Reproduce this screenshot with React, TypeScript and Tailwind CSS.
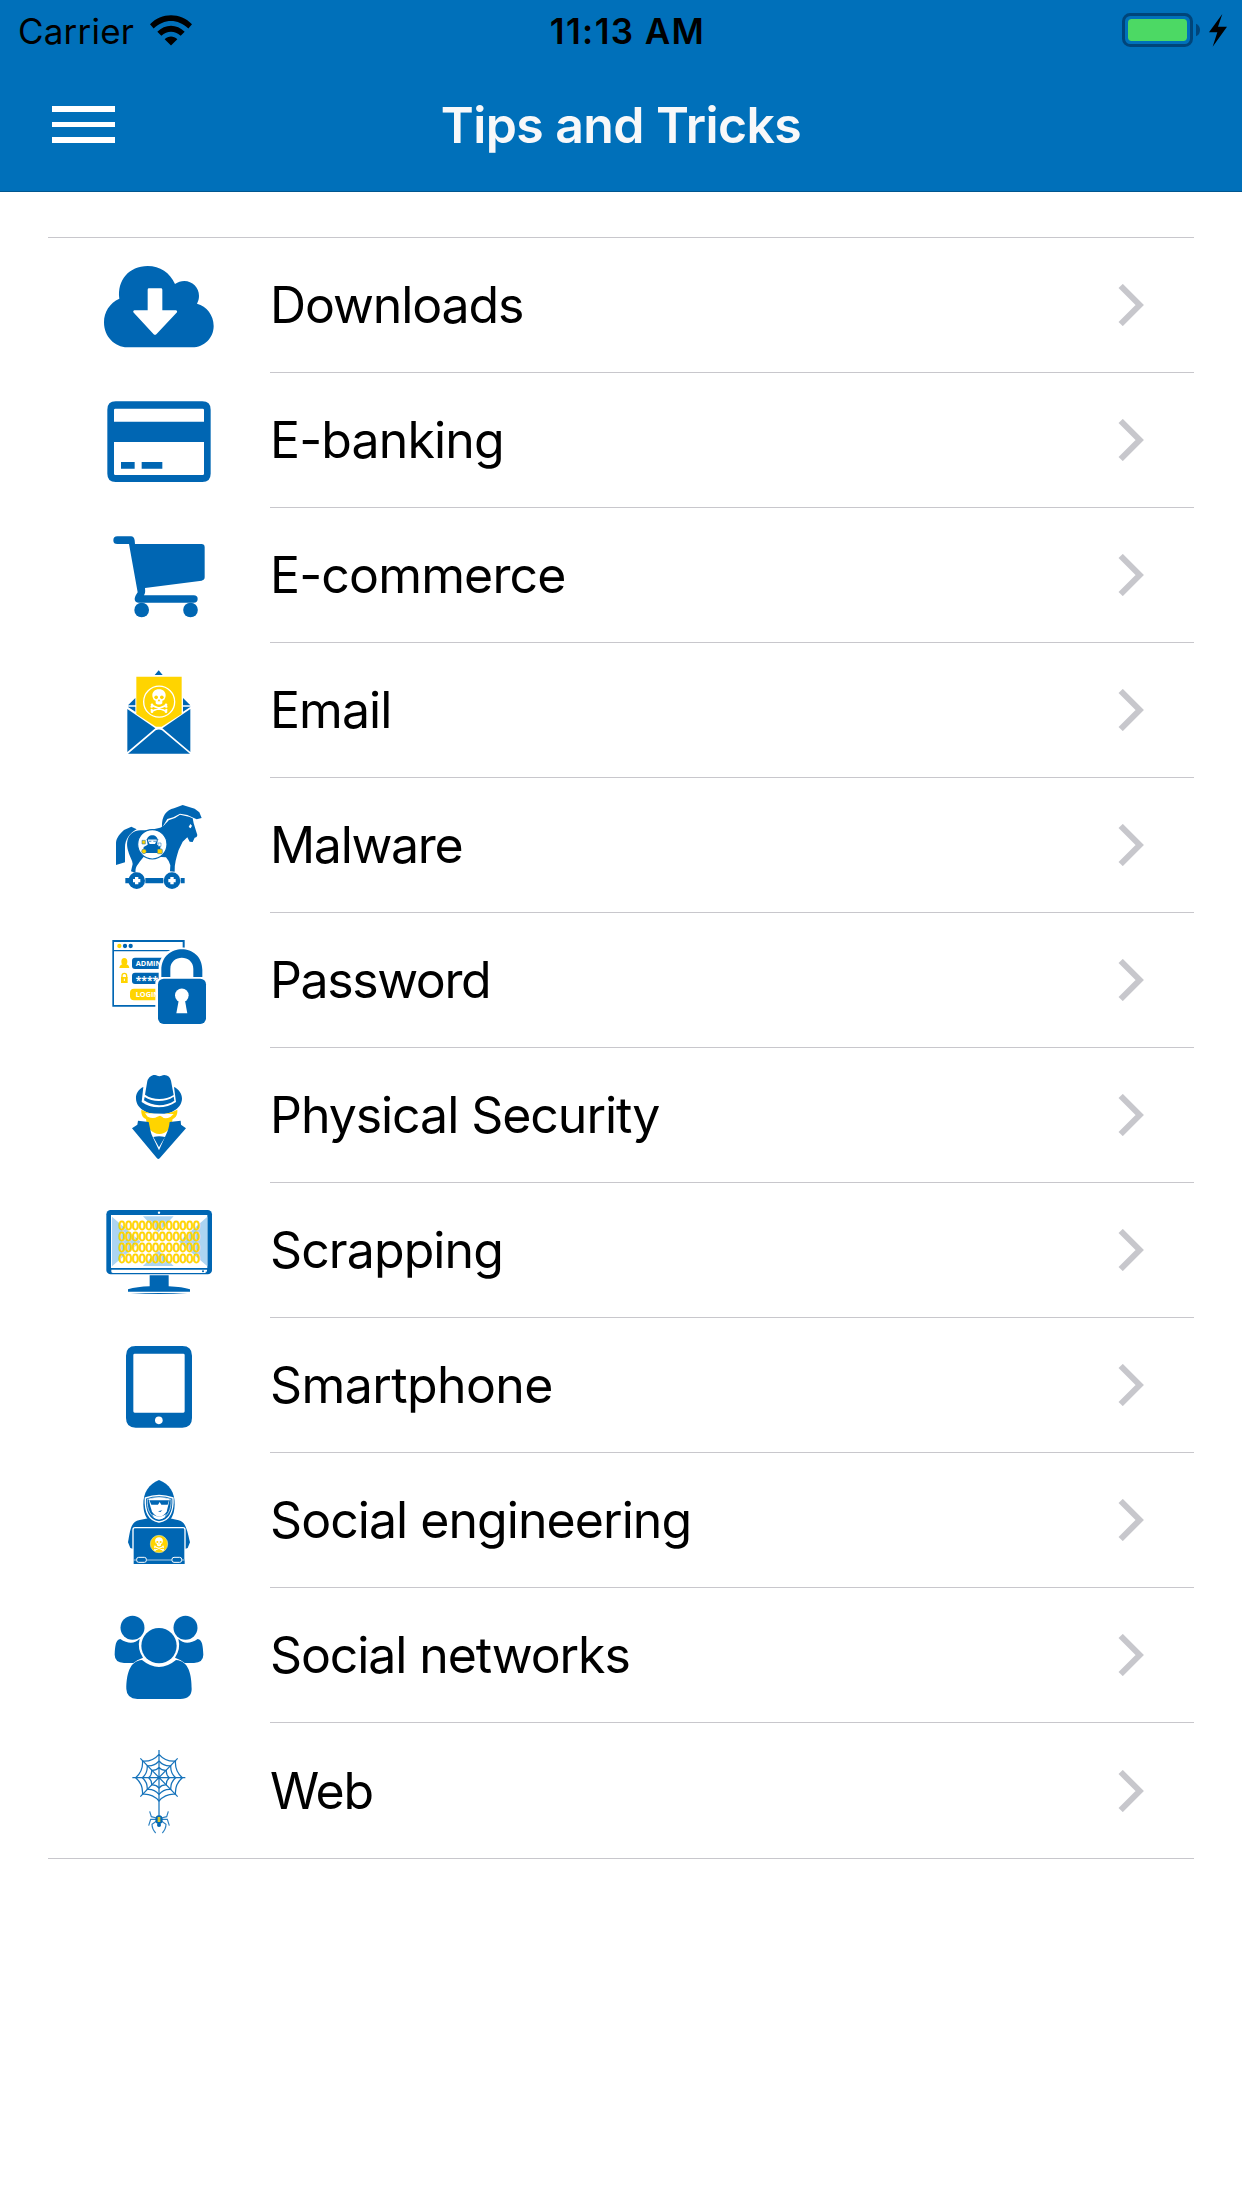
import type { ReactNode } from 'react';

const BLUE = '#0066b3';
const YELLOW = '#ffd400';

function Icon({ children }: { children: ReactNode }) {
  return (
    <svg className="h-[134px] w-[120px] shrink-0" viewBox="0 -36 360 402" fill={BLUE} aria-hidden="true">
      {children}
    </svg>
  );
}

function Skull({ cut }: { cut: string }) {
  return (
    <g>
      <g stroke="#fff" strokeWidth="5.5" strokeLinecap="round">
        <path d="M-20 11 20 27M20 11-20 27" />
      </g>
      <g fill="#fff">
        <circle cx="-21" cy="8.500" r="4" />
        <circle cx="-22" cy="14" r="3.500" />
        <circle cx="21" cy="8.500" r="4" />
        <circle cx="22" cy="14" r="3.500" />
        <circle cx="-21" cy="29" r="4" />
        <circle cx="-22" cy="24" r="3.500" />
        <circle cx="21" cy="29" r="4" />
        <circle cx="22" cy="24" r="3.500" />
        <path d="M0-38c-13 0-20 8-20 18 0 6 2 8 3 11 1 4 5 4 7 5v8c3 5 17 5 20 0v-8c2-1 6-1 7-5 1-3 3-5 3-11 0-10-7-18-20-18Z" />
      </g>
      <g fill={cut}>
        <circle cx="-8.500" cy="-14" r="5.500" />
        <circle cx="8.500" cy="-14" r="5.500" />
        <path d="m0-9 4 7h-8z" />
      </g>
    </g>
  );
}

function DownloadsIcon() {
  return (
    <Icon>
      <path d="M82 292C44 292 12 260 12 217c0-31 17-58 46-71C51 91 87 48 143 48c37 0 67 20 82 54 9-6 18-9 28-9 24 0 44 20 44 44 0 9-2 16-6 24 29 8 50 34 50 67 0 36-29 64-64 64Z" />
      <path
        fill="#fff"
        d="M147 115h36q4 0 4 4v62h41q5 2 3 6l-62 66q-4 3-8 0l-61-66q-2-4 3-6h40v-62q0-4 4-4Z"
      />
    </Icon>
  );
}

function BankingIcon() {
  return (
    <Icon>
      <path
        fillRule="evenodd"
        d="M47 49h260q25 0 25 25v192q0 25-25 25H47q-25 0-25-25V74q0-25 25-25Zm-1 22q-4 0-4 4v35h270V75q0-4-4-4ZM42 171v95q0 4 4 4h262q4 0 4-4v-95Z"
      />
      <path d="M63 231h41v20H63zM125 231h62v20h-62z" />
    </Icon>
  );
}

function CommerceIcon() {
  return (
    <Icon>
      <path d="M52 49h41q9 0 11 12l1 11h199q10 0 10 10v90q0 8-9 10l-170 22q1 8 0 15l-3 7h149q12 0 12 11t-12 11H117q-13 0-13-11 0-7 9-20L87 72H52q-12 0-12-11.500T52 49Z" />
      <circle cx="125" cy="270" r="22" />
      <circle cx="271.500" cy="270" r="22" />
    </Icon>
  );
}

function EmailIcon() {
  return (
    <Icon>
      <path d="m176 46 12 14h-24zM106 129v22H84ZM106 155v15l-23-15ZM249 129v22h22ZM249 155v15l23-15Z" />
      <path fill={YELLOW} d="M109 65h136v112l-60 38h-17l-59-38z" />
      <path d="m82 162 84 58-84 71zM271 162l-84 58 84 71zM84 296l83-70q9-5 19 0l84 70z" />
      <circle cx="177.500" cy="140" r="46.500" fill="none" stroke="#fff" strokeWidth="4" />
      <g transform="translate(177 141)">
        <Skull cut={YELLOW} />
      </g>
    </Icon>
  );
}

function MalwareIcon() {
  return (
    <Icon>
      <path d="M186 113c-2-35 14-54 36-58l26-10 36 11 14 11 7 17-15 4-15-7-13-6-22-4-20 11-18 5Z" />
      <path d="m110 118-16-8-22 10c-13 11-23 25-24 38v67l27-8v-45c0-22 14-44 35-54Z" />
      <path d="M124 121c-22-1-38 12-42 32-3 17 3 30 5 38 4 12 10 19 11 31l-5 22 14 5c-2-17 4-22 12-34l14-17 65 4 8 11 5 13-1 18 14 1c-1-23 5-43 12-65l12-25 14-13 7 13 9 1 6-13c2 0 7-1 8-8l-5-16-6-19-3-15-11-5-7-1-20-5-15 10-19 7c-12 14-20 22-29 23-18 5-34 7-53 7Z" />
      <path fill="#fff" d="m266 111 5-9 5 5-4 8Z" />
      <circle cx="157" cy="163" r="44" fill="#fff" stroke={BLUE} strokeWidth="3.500" />
      <path d="M141 152c-2-22 34-22 32 0l-2 12 10 5v20h-42l-9-8 1-10 12-7Z" />
      <path fill="#fff" d="M144 147h26v5l-5 10h-16l-5-10Z" />
      <path stroke={BLUE} strokeWidth="2" fill="none" d="M139 149h36M146 154h8M160 154h8" />
      <g fill={YELLOW} stroke={BLUE} strokeWidth="1.500">
        <path d="M126 151h10v11h-10z" />
        <circle cx="132" cy="184" r="7" />
        <rect x="172" y="177" width="15" height="14" rx="3" />
      </g>
      <path fill="#fff" stroke={BLUE} strokeWidth="1.500" d="M174 159h9v10h-9z" />
      <path d="M76 264h14v16H76zM136 264h54v16h-54zM242 264h12v16h-12z" />
      {[110, 216].map((x) => (
        <g key={x} transform={`translate(${x} 272)`}>
          <circle r="25" />
          <path fill="#fff" d="M-5-11H5v6h6V5H5v6H-5V5h-6V-5h6Z" />
        </g>
      ))}
    </Icon>
  );
}

function PasswordIcon() {
  return (
    <Icon>
      <path
        fillRule="evenodd"
        d="M37 45h217v200H37Zm5 6v24h206V51ZM42 79v161h206V79Z"
      />
      <circle cx="58" cy="63" r="6.500" fill={YELLOW} />
      <circle cx="75" cy="63" r="6.500" />
      <circle cx="92" cy="63" r="6.500" />
      <rect x="96" y="98" width="110" height="34" rx="9" />
      <rect x="96" y="143" width="110" height="34" rx="9" />
      <rect x="90" y="191" width="110" height="35" rx="12" fill={YELLOW} />
      <g fill="#fff" fontFamily="Open Sans, sans-serif" fontWeight="700">
        <text x="107" y="123" fontSize="22">ADMIN</text>
        <text x="107" y="217" fontSize="22">LOGIN</text>
        <text x="107" y="176" fontSize="31">****</text>
      </g>
      <g fill={YELLOW}>
        <ellipse cx="73" cy="110" rx="9" ry="11" />
        <path d="M58 129q1-10 12-11v-4h7v4q10 1 11 11Z" />
        <path d="M63 156h20v18H63z" />
        <path fill="none" stroke={YELLOW} strokeWidth="4" d="M66 158v-6c0-9 14-9 14 0v6" />
      </g>
      <path stroke="#fff" strokeWidth="3" d="M73 161v7" />
      <path
        fill="#fff"
        d="M176 161v-29c0-86 138-86 138 0v26q8 5 8 14v115q0 14-14 14H182q-16 0-16-14V172q0-8 10-11Z"
      />
      <path d="M184 156v-21c0-83 123-83 123 0v21h-27v-24c0-45-69-45-69 0v24Z" />
      <rect x="174" y="161" width="144" height="136" rx="17" />
      <circle cx="245.500" cy="211" r="20.500" fill="#fff" />
      <path fill="#fff" d="M237 222h17l8 43h-33Z" />
    </Icon>
  );
}

function SecurityIcon() {
  return (
    <Icon>
      <path d="m135 104 7-41c3-11 14-19 23-18 5 0 9 4 13 4 5 0 8-4 15-4 11 1 17 6 20 17l8 43c-25 16-62 16-86-1Z" />
      <path d="M134 111c24 16 62 16 87-1l2 12c-25 18-67 18-91-1Z" />
      <path d="M130 81c-14 6-23 20-22 35 1 28 31 47 69 47s68-19 69-47c0-15-10-29-24-35l6 45c-29 21-76 21-103 0Z" />
      <path
        fill={YELLOW}
        d="M124 149c35 18 72 18 108 0 1 14-3 23-14 28-4 27-20 45-40 45-22 0-37-19-40-45-10-3-15-14-14-28Z"
      />
      <path fill="#fff" d="M135 160l86 2-10 9q-17 8-25-1l-6-3-8 3q-12 8-29 0Z" />
      <path d="m96 205 16-11 2-12 32 4c4 18 6 30 9 38l22 47 22-49c5-10 8-20 10-36l33-4 1 12 15 11-79 90q-4 4-8 0ZM160 231q17-4 35 0l-18 31Z" />
    </Icon>
  );
}

function ScrappingIcon() {
  return (
    <Icon>
      <rect x="19" y="45" width="317" height="193" rx="13" />
      <path fill="#fff" d="M33 60h289v159H33zM34 224h287v9q0 1-2 1H40q-6 0-6-4Z" />
      <circle cx="177" cy="53" r="3.500" fill="#fff" />
      <path
        fill="#acd4f2"
        d="m36 65 86 75-86 74zM322 65l-85 75 85 74zM129 64h92l-46 48zM129 213h92l-46-47z"
      />
      <g
        fill={YELLOW}
        stroke={YELLOW}
        strokeWidth="2.500"
        fontFamily="Liberation Sans, sans-serif"
        fontSize="37"
      >
        {[104, 138, 171, 204].map((y) => (
          <text key={y} x="56" y={y} textLength="244" lengthAdjust="spacingAndGlyphs">
            000000000000
          </text>
        ))}
      </g>
      <circle cx="309" cy="229" r="3" fill={BLUE} />
      <circle cx="319" cy="232" r="2.500" fill={BLUE} />
      <path d="M149 241h57v33q42 2 64 9v7H84v-7q27-8 65-9ZM92 294h170q-82 6-170 0Z" />
    </Icon>
  );
}

function SmartphoneIcon() {
  return (
    <Icon>
      <path
        fillRule="evenodd"
        d="M107 48h140q29 0 29 29v187q0 29-29 29H107q-29 0-29-29V77q0-29 29-29Zm-3 23q-4 0-4 4v169q0 4 4 4h146q4 0 4-4V75q0-4-4-4Z"
      />
      <circle cx="176.500" cy="271" r="11.500" fill="#fff" />
    </Icon>
  );
}

function EngineeringIcon() {
  return (
    <Icon>
      <path d="M84 232c7-37 8-62 35-67l26-5h64l27 6c21 5 25 27 34 66l-7 17-6 2H98l-7-2Z" />
      <path d="M177 45c-31 12-48 39-47 74 1 25 7 40 21 50h53c13-10 19-24 20-50 1-37-16-62-47-74Z" />
      <path
        fill={BLUE}
        stroke="#fff"
        strokeWidth="4"
        d="M136 99q41-15 83 0c2 37-9 68-42 72-32-5-43-34-41-72Z"
      />
      <path fill="none" stroke="#fff" strokeWidth="2" d="M142 103q35-11 71 0c2 32-10 54-36 60-26-6-37-29-35-60Z" />
      <path fill="#fff" d="M146 102q32-9 63 0l-4 18-5 20q-11 15-22 15t-22-15l-6-20Z" />
      <path fill="#fff" d="M157 148q20 14 41 0l-5 10q-16 9-31 0Z" />
      <path d="M148 106h59l-4 13h-19l-5-8-5 8h-20ZM174 139l13-3-6 5Z" />
      <rect x="99" y="188" width="156" height="100" rx="6" stroke="#fff" strokeWidth="4" />
      <path d="M101 283h153v14H101z" />
      <path stroke="#fff" strokeWidth="2" d="M101 285h153" />
      <g stroke="#fff" strokeWidth="3">
        <rect x="110" y="277" width="29" height="15" rx="6" />
        <rect x="216" y="277" width="29" height="15" rx="6" />
      </g>
      <circle cx="177" cy="237" r="26" fill={YELLOW} stroke="#d9e2a0" strokeWidth="2" />
      <g transform="translate(177 239) scale(.58)">
        <Skull cut={YELLOW} />
      </g>
    </Icon>
  );
}

function NetworksIcon() {
  return (
    <Icon>
      <circle cx="97.500" cy="83" r="36" />
      <circle cx="256.500" cy="83" r="36" />
      <path d="M61 117q35 23 58-1-8 30 10 57l-17 8-12 8H72q-28-2-28-25c1-25 3-46 17-47ZM293 117q-35 23-58-1 8 30-10 57l17 8 12 8h28q28-2 28-25c-1-25-3-46-17-47Z" />
      <circle cx="177" cy="137" r="53" />
      <path d="M126 180q51 42 102 0c39 2 47 46 47 87q0 29-34 30H112q-32-1-33-30c0-41 9-85 47-87Z" />
    </Icon>
  );
}

function WebIcon() {
  const web = (r: number) => {
    const pts = Array.from({ length: 8 }, (_, i) => {
      const a = (i * Math.PI) / 4;
      return [177 + r * Math.sin(a), 128 - r * Math.cos(a)];
    });
    return pts
      .map(([x, y], i) => {
        const [nx, ny] = pts[(i + 1) % 8];
        const qx = 177 + ((x + nx) / 2 - 177) * 0.79;
        const qy = 128 + ((y + ny) / 2 - 128) * 0.79;
        return `${i === 0 ? `M${x} ${y}` : ''}Q${qx} ${qy} ${nx} ${ny}`;
      })
      .join('');
  };
  return (
    <Icon>
      <g fill="none" stroke="#1673bb" strokeWidth="3.700">
        <path d="M177 45v200M97 128h159M121 70l112 115M233 70 121 185" />
        <path d={web(70)} />
        <path d={web(50)} />
        <path d={web(31)} />
      </g>
      <g fill="none" stroke="#2b80c1" strokeWidth="3.500">
        <path d="m170 249-16-4-5-16M184 249l16-4 5-16M169 253h-17l-6 19M185 253h17l6 19M170 258l-14 10q0 14 11 26M184 258l14 10q0 14-11 26" />
      </g>
      <ellipse cx="177" cy="254" rx="11" ry="13" />
      <path fill="#d5c52e" d="M173 246h8v15h-8z" />
      <ellipse cx="177" cy="270" rx="6" ry="6" />
    </Icon>
  );
}

const items = [
  { label: 'Downloads', tracking: 'tracking-[-1.1px]', Glyph: DownloadsIcon },
  { label: 'E-banking', tracking: 'tracking-[-0.85px]', Glyph: BankingIcon },
  { label: 'E-commerce', tracking: 'tracking-[-0.85px]', Glyph: CommerceIcon },
  { label: 'Email', tracking: 'tracking-[-0.95px]', Glyph: EmailIcon },
  { label: 'Malware', tracking: 'tracking-[-1.3px]', Glyph: MalwareIcon },
  { label: 'Password', tracking: 'tracking-[-1.4px]', Glyph: PasswordIcon },
  { label: 'Physical Security', tracking: 'tracking-[-1.05px]', Glyph: SecurityIcon },
  { label: 'Scrapping', tracking: 'tracking-[-0.9px]', Glyph: ScrappingIcon },
  { label: 'Smartphone', tracking: 'tracking-[-0.6px]', Glyph: SmartphoneIcon },
  { label: 'Social engineering', tracking: 'tracking-[-0.95px]', Glyph: EngineeringIcon },
  { label: 'Social networks', tracking: 'tracking-[-1.1px]', Glyph: NetworksIcon },
  { label: 'Web', tracking: 'tracking-[-1.2px]', Glyph: WebIcon },
];

function StatusBar() {
  return (
    <div className="grid h-[60px] grid-cols-3 items-center text-[35px] leading-[60px] text-black">
      <div className="flex items-center pl-[18px]">
        <span className="w-[132px] tracking-[0.2px]">Carrier</span>
        <svg className="mb-px h-[31px] w-[42px]" viewBox="0 0 126 92" aria-hidden="true">
          <path d="M0 27C34-9 92-9 126 27L115 40C84 10 42 10 11 40ZM22 50c23-24 59-24 82 0L92 62C74 46 52 46 34 62ZM44 72c11-11 27-11 38 0L63 91Z" />
        </svg>
      </div>
      <span className="pl-[13px] text-center font-semibold tracking-[1.4px]">11:13 AM</span>
      <svg className="mr-[8px] mb-[2px] h-[60px] w-[120px] justify-self-end" viewBox="0 0 360 180" aria-hidden="true">
        <rect x="28.500" y="43.500" width="204" height="93" rx="20" fill="none" stroke="#00457a" strokeWidth="9" />
        <rect x="42" y="57" width="177" height="66" rx="11" fill="#4cd964" />
        <path d="M246 71q12 5 12 19t-12 19Z" fill="#00457a" />
        <path d="m325 42-40 55h25l-14 43 43-60h-27Z" />
      </svg>
    </div>
  );
}

export default function App() {
  return (
    <div className="min-h-[2208px] w-[1242px] bg-white font-['Inter',sans-serif]">
      <header className="h-[192px] border-b border-[#00568f] bg-[#0070ba]">
        <StatusBar />
        <div className="grid h-[131px] grid-cols-[1fr_auto_1fr] items-center">
          <button className="mb-[2px] ml-[52px] flex w-[63px] flex-col gap-[10px]" aria-label="Menu">
            <span className="h-[5.700px] bg-white" />
            <span className="h-[5.700px] bg-white" />
            <span className="h-[5.700px] bg-white" />
          </button>
          <h1 className="text-[50px] font-semibold tracking-[-0.57px] text-[#f8f8f9]">Tips and Tricks</h1>
        </div>
      </header>
      <ul className="mx-[48px] mt-[45px] border-y border-[#c8c7cc]">
        {items.map(({ label, tracking, Glyph }, i) => (
          <li key={label} className="flex h-[135px]">
            <div className="flex w-[222px] pl-[52px]">
              <Glyph />
            </div>
            <div
              className={`flex flex-1 items-center justify-between pr-[50px] ${
                i < items.length - 1 ? 'border-b border-[#c8c7cc]' : ''
              }`}
            >
              <span className={`text-[50px] leading-none text-black ${tracking}`}>{label}</span>
              <svg className="h-[42px] w-[26px]" viewBox="0 0 78 126" fill="none" aria-hidden="true">
                <path d="m8 6 57 57L8 120" stroke="#c7c7cc" strokeWidth="18" />
              </svg>
            </div>
          </li>
        ))}
      </ul>
    </div>
  );
}
